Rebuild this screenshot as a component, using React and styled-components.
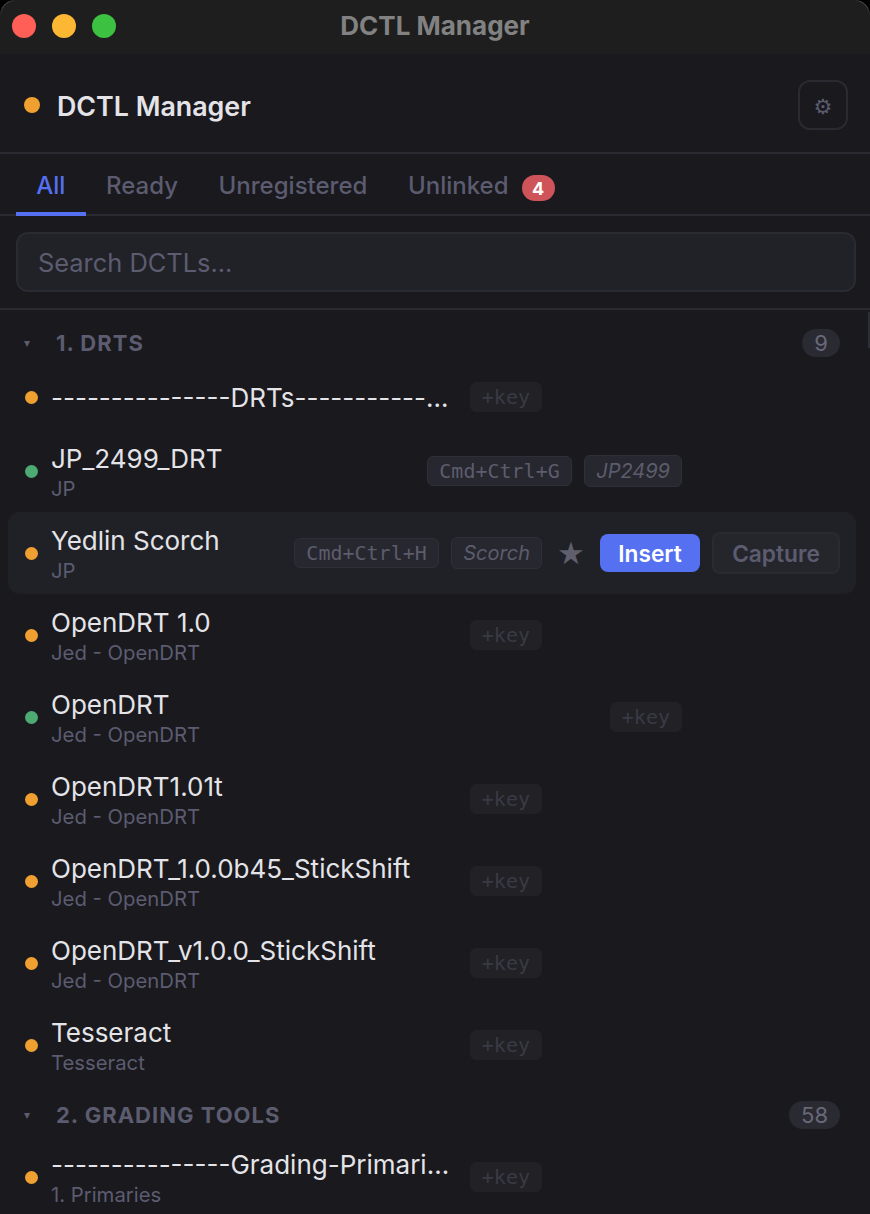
import styled, { createGlobalStyle } from "styled-components";

const GlobalStyle = createGlobalStyle`
  html, body {
    margin: 0;
    padding: 0;
    background: #000;
  }
  * {
    box-sizing: border-box;
  }
`;

const Window = styled.div`
  width: 870px;
  height: 1214px;
  overflow: hidden;
  position: relative;
  background: #19191e;
  border-radius: 15px 15px 0 0;
  font-family: Inter, "Liberation Sans", sans-serif;
`;

const CornerRim = styled.span`
  position: absolute;
  top: 0;
  ${(p) => p.$side}: 0;
  width: 15px;
  height: 15px;
  border-top: 1px solid #5a5a5a;
  border-${(p) => p.$side}: 1px solid #5a5a5a;
  border-top-${(p) => p.$side}-radius: 15px;
  -webkit-mask-image: radial-gradient(circle at ${(p) => p.$side} top, #000 30%, transparent 75%);
`;

const ScrollThumb = styled.span`
  position: absolute;
  top: 312px;
  right: 0;
  width: 2px;
  height: 36px;
  background: #2e2e36;
`;

const TitleBar = styled.div`
  height: 54px;
  padding-bottom: 4px;
  background: #1e1e1e;
  display: flex;
  align-items: center;
  justify-content: center;
  position: relative;
`;

const Traffic = styled.div`
  position: absolute;
  left: 12px;
  top: 14px;
  display: flex;
  gap: 16px;
`;

const TrafficLight = styled.span`
  width: 24px;
  height: 24px;
  border-radius: 50%;
  background: ${(p) => p.$color};
`;

const WindowTitle = styled.div`
  font-size: 26px;
  font-weight: 700;
  color: #828282;
`;

const Header = styled.div`
  height: 100px;
  border-bottom: 2px solid #2a2a32;
  display: flex;
  align-items: center;
  justify-content: space-between;
  padding: 4px 22px 0 24px;
`;

const Brand = styled.div`
  display: flex;
  align-items: center;
  gap: 17px;
`;

const BrandDot = styled.span`
  width: 16px;
  height: 16px;
  border-radius: 50%;
  background: #f0a030;
`;

const BrandName = styled.h1`
  margin: 2px 0 0;
  font-size: 26.8px;
  font-weight: 600;
  color: #e4e4e8;
`;

const SettingsButton = styled.button`
  width: 50px;
  height: 50px;
  padding: 3px 0 0;
  background: none;
  border: 2px solid #2a2a32;
  border-radius: 12px;
  color: #5c5c70;
  font-family: "DejaVu Sans", sans-serif;
  font-size: 21px;
`;

const Tabs = styled.div`
  height: 62px;
  border-bottom: 2px solid #2a2a32;
  display: flex;
  padding: 0 16px;
`;

const Tab = styled.div`
  height: 62px;
  padding: 4px 20.3px 0;
  display: flex;
  align-items: center;
  gap: 13px;
  font-size: 24px;
  font-weight: 500;
  color: ${(p) => (p.$active ? "#5570f0" : "#5c5c70")};
  border-bottom: 4px solid ${(p) => (p.$active ? "#5570f0" : "transparent")};
`;

const CountBadge = styled.span`
  height: 26px;
  min-width: 33px;
  margin-top: 6px;
  padding: 0 10px;
  border-radius: 13px;
  background: #cf545a;
  color: #fff;
  font-size: 18px;
  font-weight: 700;
  display: flex;
  align-items: center;
  justify-content: center;
`;

const SearchArea = styled.div`
  height: 94px;
  padding: 16px 14px 0 16px;
  border-bottom: 2px solid #2a2a32;
`;

const SearchInput = styled.input`
  width: 100%;
  height: 60px;
  padding: 0 20px;
  background: #212228;
  border: 2px solid #2a2a32;
  border-radius: 12px;
  color: #e4e4e8;
  font-family: inherit;
  font-size: 25.4px;
  &::placeholder {
    color: #5c5c70;
    opacity: 1;
  }
`;

const List = styled.div`
  padding: 12px 14px 0 8px;
`;

const SectionHeader = styled.div`
  height: 42px;
  margin-top: ${(p) => (p.$first ? "0" : "8px")};
  padding: 0 16px 0 16px;
  display: flex;
  align-items: center;
`;

const Caret = styled.span`
  width: 32px;
  font-family: "DejaVu Sans", sans-serif;
  font-size: 12px;
  color: #5c5c70;
`;

const SectionName = styled.span`
  flex: 1;
  font-size: 22px;
  font-weight: 700;
  letter-spacing: 1px;
  color: #5c5c70;
`;

const SectionCount = styled.span`
  height: 28px;
  padding: 0 12px;
  min-width: 37px;
  border-radius: 14px;
  background: #2a2a33;
  color: #686878;
  font-size: 22px;
  display: flex;
  align-items: center;
  justify-content: center;
`;

const Row = styled.div`
  height: ${(p) => (p.$single ? "66px" : "82px")};
  padding: 0 16px 0 17px;
  display: flex;
  align-items: center;
  gap: 12px;
  border-radius: 12px;
  background: ${(p) => (p.$hover ? "#202126" : "transparent")};
`;

const StatusDot = styled.span`
  flex: none;
  width: 13px;
  height: 13px;
  margin-right: 1px;
  border-radius: 50%;
  background: ${(p) => (p.$ready ? "#4caa72" : "#f0a030")};
`;

const Info = styled.div`
  flex: 1;
  min-width: 0;
  padding-top: 2px;
`;

const Name = styled.div`
  font-size: 26px;
  line-height: 32px;
  color: #e4e4e8;
  white-space: nowrap;
  overflow: hidden;
  text-overflow: ellipsis;
`;

const Sub = styled.div`
  font-size: 20.3px;
  line-height: 24px;
  margin-top: 2px;
  color: #5c5c70;
`;

const Chip = styled.span`
  flex: none;
  height: ${(p) => (p.$alias ? "32px" : "30px")};
  padding: 0 ${(p) => (p.$empty || p.$alias ? "11px" : "11.5px")};
  display: flex;
  align-items: center;
  border-radius: 6px;
  background: ${(p) => (p.$empty ? "#212126" : "#27272f")};
  border: 1px solid ${(p) => (p.$empty ? "#212126" : "#2f2f38")};
  color: ${(p) => (p.$empty ? "#3a3a45" : "#5c5c6c")};
  font-family: ${(p) => (p.$alias ? "Inter, sans-serif" : '"DejaVu Sans Mono", monospace')};
  font-style: ${(p) => (p.$alias ? "italic" : "normal")};
  font-size: 20px;
`;

const Actions = styled.div`
  flex: none;
  display: flex;
  align-items: center;
  gap: 12px;
  margin-left: ${(p) => (p.$compact ? "18px" : "0")};
  visibility: ${(p) => (p.$visible ? "visible" : "hidden")};
`;

const Star = styled.span`
  width: 34px;
  text-align: center;
  font-family: "DejaVu Sans", sans-serif;
  font-size: 31px;
  line-height: 38px;
  color: #5f5f6e;
`;

const InsertButton = styled.button`
  width: 100px;
  height: 38px;
  padding: 0;
  background: #5570f0;
  border: none;
  border-radius: 8px;
  color: #fff;
  font-family: inherit;
  font-size: 22.7px;
  font-weight: 600;
`;

const CaptureButton = styled.button`
  width: 128px;
  height: 42px;
  padding: 0;
  background: #25262c;
  border: 2px solid #2a2a32;
  border-radius: 8px;
  color: #5c5c70;
  font-family: inherit;
  font-size: 22.7px;
  font-weight: 600;
`;

const drts = [
  { name: "JP_2499_DRT", sub: "JP", ready: true, keys: "Cmd+Ctrl+G", alias: "JP2499" },
  { name: "Yedlin Scorch", sub: "JP", keys: "Cmd+Ctrl+H", alias: "Scorch", hover: true },
  { name: "OpenDRT 1.0", sub: "Jed - OpenDRT" },
  { name: "OpenDRT", sub: "Jed - OpenDRT", ready: true },
  { name: "OpenDRT1.01t", sub: "Jed - OpenDRT" },
  { name: "OpenDRT_1.0.0b45_StickShift", sub: "Jed - OpenDRT" },
  { name: "OpenDRT_v1.0.0_StickShift", sub: "Jed - OpenDRT" },
  { name: "Tesseract", sub: "Tesseract" },
];

function DctlRow({ name, sub, ready, keys, alias, hover }) {
  return (
    <Row $hover={hover} $single={!sub}>
      <StatusDot $ready={ready} />
      <Info>
        <Name>{name}</Name>
        {sub && <Sub>{sub}</Sub>}
      </Info>
      {keys ? <Chip>{keys}</Chip> : <Chip $empty>+key</Chip>}
      {alias && <Chip $alias>{alias}</Chip>}
      <Actions $visible={hover} $compact={ready}>
        {!ready && <Star>★</Star>}
        {!ready && <InsertButton>Insert</InsertButton>}
        <CaptureButton>Capture</CaptureButton>
      </Actions>
    </Row>
  );
}

export default function App() {
  return (
    <Window>
      <GlobalStyle />
      <TitleBar>
        <Traffic>
          <TrafficLight $color="#ff5f57" />
          <TrafficLight $color="#fdb833" />
          <TrafficLight $color="#3dc140" />
        </Traffic>
        <WindowTitle>DCTL Manager</WindowTitle>
      </TitleBar>
      <CornerRim $side="left" />
      <CornerRim $side="right" />
      <Header>
        <Brand>
          <BrandDot />
          <BrandName>DCTL Manager</BrandName>
        </Brand>
        <SettingsButton>⚙</SettingsButton>
      </Header>
      <Tabs>
        <Tab $active>All</Tab>
        <Tab>Ready</Tab>
        <Tab>Unregistered</Tab>
        <Tab>
          Unlinked <CountBadge>4</CountBadge>
        </Tab>
      </Tabs>
      <SearchArea>
        <SearchInput placeholder="Search DCTLs..." readOnly />
      </SearchArea>
      <List>
        <SectionHeader $first>
          <Caret>▾</Caret>
          <SectionName>1. DRTS</SectionName>
          <SectionCount>9</SectionCount>
        </SectionHeader>
        <DctlRow name="---------------DRTs---------------" />
        {drts.map((d) => (
          <DctlRow key={d.name} {...d} />
        ))}
        <SectionHeader>
          <Caret>▾</Caret>
          <SectionName>2. GRADING TOOLS</SectionName>
          <SectionCount>58</SectionCount>
        </SectionHeader>
        <DctlRow name="---------------Grading-Primaries---------------" sub="1. Primaries" />
      </List>
      <ScrollThumb />
    </Window>
  );
}
